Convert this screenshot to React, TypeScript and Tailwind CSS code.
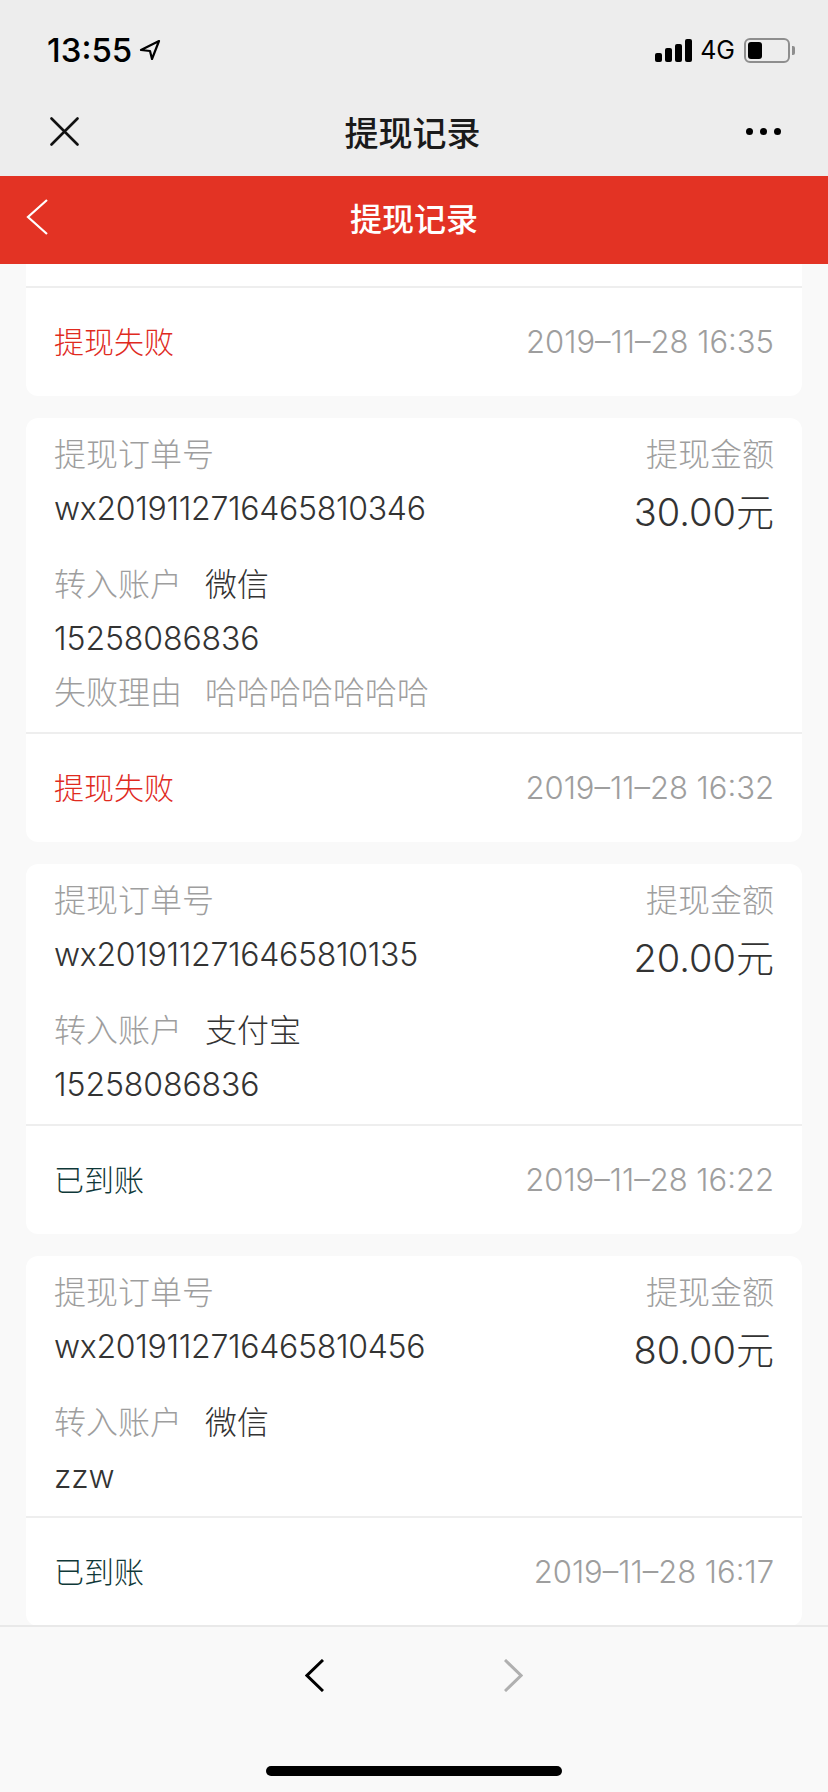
const FONT = "font-['Inter','Noto_Sans_CJK_SC',sans-serif]";

function Card({ order, amount, account, number, reason, status, time, failed }: { order: string; amount: string; account: string; number: string; reason?: string; status: string; time: string; failed?: boolean }) {
  return (
    <div className="mx-[26px] mt-[22px] rounded-[12px] bg-white">
      <div className="px-[28px] pt-[16px]">
        <div className="flex h-[42px] items-center justify-between text-[32px] font-light text-[#9e9e9e]">
          <span>提现订单号</span>
          <span>提现金额</span>
        </div>
        <div className="flex h-[64px] items-center justify-between text-[#333333]">
          <span className="pt-[1px] text-[32px] font-light tracking-[-0.3px]">{order}</span>
          <span className="pt-[8px] text-[38px] font-light">{amount}</span>
        </div>
        <div className="mt-[18px] flex h-[54px] items-center text-[32px] font-light">
          <span className="w-[151px] text-[#9e9e9e]">转入账户</span>
          <span className="text-[#333333]">{account}</span>
        </div>
        <div className="flex h-[54px] items-center text-[32px] font-light tracking-[-0.1px] text-[#333333]">{number}</div>
        {reason && (
          <div className="flex h-[54px] items-center text-[32px] font-light text-[#9e9e9e]">
            <span className="w-[151px]">失败理由</span>
            <span>{reason}</span>
          </div>
        )}
      </div>
      <StatusRow status={status} time={time} failed={failed} />
    </div>
  );
}

function StatusRow({ status, time, failed }: { status: string; time: string; failed?: boolean }) {
  return (
    <div className="mt-[12px] flex h-[110px] items-center justify-between border-t-2 border-[#eeeeee] px-[28px]">
      <span className={`text-[30px] font-light ${failed ? "text-[#e02a1e]" : "text-[#0f3838]"}`}>{status}</span>
      <span className="text-[31px] font-light text-[#9e9e9e]">{time}</span>
    </div>
  );
}

export default function App() {
  return (
    <div className={`flex h-[1792px] w-[828px] flex-col overflow-hidden bg-[#f9f9f9] ${FONT}`}>
      <header className="h-[176px] shrink-0 bg-[#ededed]">
        <div className="flex h-[88px] items-center justify-between pl-[47px] pr-[33px] pt-[12px]">
          <div className="flex items-center gap-[7px]">
            <span className="text-[33px] font-medium leading-none text-black">13:55</span>
            <svg width="22" height="22" viewBox="0 0 22 22">
              <path d="M20 2 L2 11 L11 12 L13 20 Z" fill="none" stroke="#000" strokeWidth="2.2" strokeLinejoin="round" />
            </svg>
          </div>
          <div className="flex items-center">
            <div className="flex items-end gap-[3px]">
              <i className="h-[9px] w-[7px] rounded-[2px] bg-black" />
              <i className="h-[14px] w-[7px] rounded-[2px] bg-black" />
              <i className="h-[18px] w-[7px] rounded-[2px] bg-black" />
              <i className="h-[23px] w-[7px] rounded-[2px] bg-black" />
            </div>
            <span className="ml-[8px] text-[25px] leading-none text-black">4G</span>
            <div className="ml-[9px] flex h-[25px] w-[46px] items-center rounded-[6px] border-2 border-[#8e8e8e] p-[2px]">
              <i className="h-[17px] w-[14px] rounded-[3px] bg-black" />
            </div>
            <i className="ml-[2px] h-[9px] w-[3px] rounded-r-[2px] bg-[#8e8e8e]" />
          </div>
        </div>
        <div className="relative flex h-[88px] items-center justify-center pr-[3px] pt-[2px]">
          <svg className="absolute left-[50px] top-[29px]" width="29" height="29" viewBox="0 0 29 29">
            <path d="M1.5 1.5 L27.5 27.5 M27.5 1.5 L1.5 27.5" stroke="#111" strokeWidth="2.6" strokeLinecap="round" />
          </svg>
          <span className="text-[34px] font-medium text-[#1a1a1a]">提现记录</span>
          <div className="absolute right-[47px] top-[40px] flex gap-[7px]">
            <i className="size-[7px] rounded-full bg-black" />
            <i className="size-[7px] rounded-full bg-black" />
            <i className="size-[7px] rounded-full bg-black" />
          </div>
        </div>
      </header>
      <div className="relative flex h-[88px] shrink-0 items-center justify-center bg-[#e33324]">
        <svg className="absolute left-[25px] top-[22px]" width="24" height="38" viewBox="0 0 24 38">
          <path d="M22 2 L3 19 L22 36" fill="none" stroke="#fff" strokeWidth="2.2" />
        </svg>
        <span className="text-[32px] font-medium text-white">提现记录</span>
      </div>
      <main className="min-h-0 flex-1 overflow-hidden">
        <div className="mx-[26px] rounded-b-[12px] bg-white pt-[22px]">
          <div className="-mt-[12px]">
            <StatusRow status="提现失败" time="2019–11–28 16:35" failed />
          </div>
        </div>
        <Card order="wx2019112716465810346" amount="30.00元" account="微信" number="15258086836" reason="哈哈哈哈哈哈哈" status="提现失败" time="2019–11–28 16:32" failed />
        <Card order="wx2019112716465810135" amount="20.00元" account="支付宝" number="15258086836" status="已到账" time="2019–11–28 16:22" />
        <Card order="wx2019112716465810456" amount="80.00元" account="微信" number="zzw" status="已到账" time="2019–11–28 16:17" />
      </main>
      <footer className="relative h-[167px] shrink-0 border-t-2 border-[#e9e9e9] bg-[#f9f9f9]">
        <div className="flex justify-center gap-[180px] pt-[32px]">
          <svg width="19" height="33" viewBox="0 0 19 33">
            <path d="M18 1 L2 16.5 L18 32" fill="none" stroke="#000" strokeWidth="3" />
          </svg>
          <svg width="19" height="33" viewBox="0 0 19 33">
            <path d="M1 1 L17 16.5 L1 32" fill="none" stroke="#b0b0b0" strokeWidth="3" />
          </svg>
        </div>
        <div className="absolute bottom-[16px] left-[266px] h-[10px] w-[296px] rounded-full bg-black" />
      </footer>
    </div>
  );
}
